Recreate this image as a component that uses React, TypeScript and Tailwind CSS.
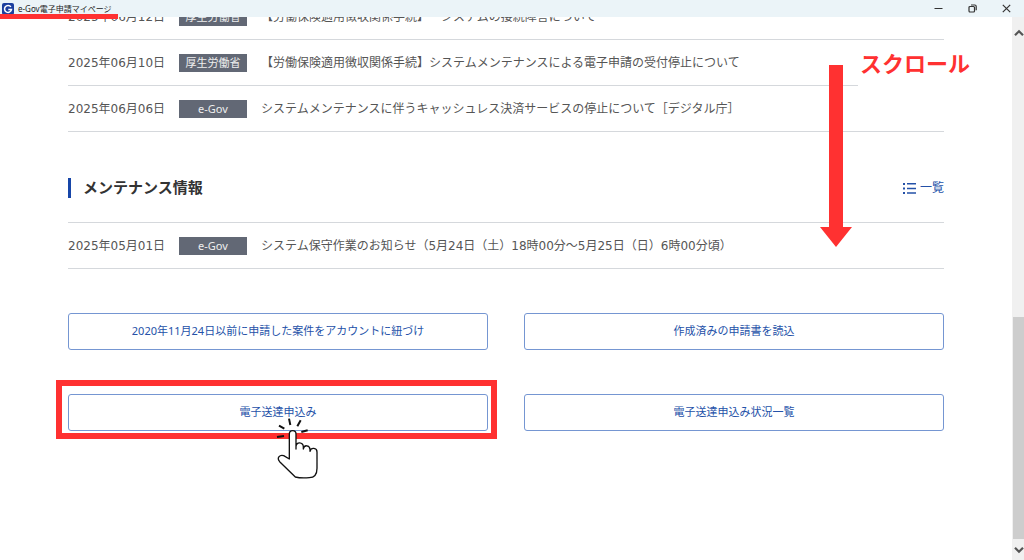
import React from 'react';

interface NewsItem {
  date: string;
  source: string;
  title: string;
}

const notices: NewsItem[] = [
  { date: '2025年06月12日', source: '厚生労働省', title: '【労働保険適用徴収関係手続】　システムの接続障害について' },
  { date: '2025年06月10日', source: '厚生労働省', title: '【労働保険適用徴収関係手続】システムメンテナンスによる電子申請の受付停止について' },
  { date: '2025年06月06日', source: 'e-Gov', title: 'システムメンテナンスに伴うキャッシュレス決済サービスの停止について［デジタル庁］' },
];

const maintenance: NewsItem[] = [
  { date: '2025年05月01日', source: 'e-Gov', title: 'システム保守作業のお知らせ（5月24日（土）18時00分～5月25日（日）6時00分頃）' },
];

const TitleBar: React.FC = () => (
  <header className="relative z-10 flex h-[17px] shrink-0 items-center justify-between bg-[#ebf4f8] pr-px">
    <div className="flex items-center gap-1 pl-0.5">
      <svg viewBox="0 0 12 12" className="h-3 w-3" aria-hidden="true">
        <rect width="12" height="12" rx="2" fill="#1c3f9e" />
        <path d="M8.9 3.9A3.5 3.5 0 1 0 9.5 6.4H6.3" fill="none" stroke="#fff" strokeWidth="1.5" />
      </svg>
      <h1 className="font-['Noto_Sans','Noto_Sans_CJK_JP',sans-serif] text-[8px] leading-none text-[#222]">
        e-Gov電子申請マイページ
      </h1>
    </div>
    <div className="flex text-[#333]">
      <button type="button" aria-label="最小化" className="flex w-[34px] items-center justify-center">
        <svg viewBox="0 0 9 9" className="h-[9px] w-[9px]" fill="none" stroke="currentColor">
          <path d="M.5 4.5h8" />
        </svg>
      </button>
      <button type="button" aria-label="元に戻す" className="flex w-[34px] items-center justify-center">
        <svg viewBox="0 0 9 9" className="h-[9px] w-[9px]" fill="none" stroke="currentColor" strokeWidth="1.2">
          <rect x="1" y="2.5" width="5.5" height="5.5" rx="1" />
          <path d="M3 1h3.8A1.4 1.4 0 0 1 8.2 2.4V6.2" />
        </svg>
      </button>
      <button type="button" aria-label="閉じる" className="flex w-[34px] items-center justify-center">
        <svg viewBox="0 0 9 9" className="h-[9px] w-[9px]" fill="none" stroke="currentColor" strokeWidth="1.2">
          <path d="M.8.8l7.4 7.4M8.2.8L.8 8.2" />
        </svg>
      </button>
    </div>
    {/* Marker under the window title */}
    <div className="absolute left-0 top-3.5 h-[5px] w-[118px] bg-[#ff3131]" />
  </header>
);

const NewsRow: React.FC<{ item: NewsItem }> = ({ item }) => (
  <li className="flex h-[46px] items-center border-b border-[#d5d8dc] text-xs text-[#555]">
    <time className="w-[111px] shrink-0">{item.date}</time>
    <span className="mr-3.5 flex h-[18px] w-[68px] shrink-0 items-center justify-center bg-[#626875] font-['Noto_Sans','Noto_Sans_CJK_JP',sans-serif] text-[11px] leading-none text-[#eee]">
      {item.source}
    </span>
    <span className="whitespace-nowrap [text-spacing-trim:space-all]">{item.title}</span>
  </li>
);

const ActionButton: React.FC<{ label: string }> = ({ label }) => (
  <button
    type="button"
    className="h-[37px] w-full rounded-[3px] border border-[#7596d2] bg-white font-['Noto_Sans','Noto_Sans_CJK_JP',sans-serif] text-[11px] text-[#2451a8]"
  >
    {label}
  </button>
);

const TapHand: React.FC = () => (
  <svg
    viewBox="78 140 129 189"
    className="absolute left-1/2 top-[23px] -ml-0.5 h-[63px] w-[43px]"
    fill="none"
    stroke="#111"
    strokeLinecap="round"
    strokeLinejoin="round"
    aria-hidden="true"
  >
    <path
      d="M118 266V191a10 10 0 0 1 20 0V236V228C139 213 159 215 160 229V236C162 222 179 224 180 237V243C183 230 201 232 201 245V294C201 312 192 322 178 322C164 323 148 323 136 320L89 274C79 262 90 252 101 256L118 266Z"
      fill="#fff"
      strokeWidth="4"
    />
    <path d="M117 145l4 19M152 150l-10 18M87 166l16 9M173 180l-19 5M81 200l21-3" strokeWidth="6" strokeLinecap="butt" />
  </svg>
);

const ScrollBar: React.FC = () => (
  <div className="flex w-3 shrink-0 flex-col bg-[#f0f0f0] pl-px text-[#555]">
    <button type="button" aria-label="上へ" className="flex h-8 items-center justify-center">
      <svg viewBox="0 0 10 8" className="h-2 w-2.5" fill="none" stroke="currentColor" strokeWidth="2.2">
        <path d="M1 6.2L5 2.2L9 6.2" />
      </svg>
    </button>
    <div className="flex-[268]" />
    <div className="flex-[222] bg-[#cdcdcd]" />
    <button type="button" aria-label="下へ" className="flex h-[21px] items-center justify-center">
      <svg viewBox="0 0 10 8" className="h-2 w-2.5" fill="none" stroke="currentColor" strokeWidth="2.2">
        <path d="M1 1.8L5 5.8L9 1.8" />
      </svg>
    </button>
  </div>
);

const ScrollHint: React.FC = () => (
  <>
    <svg viewBox="0 0 32 182" className="absolute right-[160px] top-12 h-[182px] w-8" aria-hidden="true">
      <path d="M9 0H23V162H32L16 182L0 162H9Z" fill="#ff3131" />
    </svg>
    <div className="absolute right-10 top-7 bg-white px-0.5 pb-2 pt-1 text-[22px] font-bold leading-8 text-[#ff3131]">
      スクロール
    </div>
  </>
);

const App: React.FC = () => {
  return (
    <div className="flex h-screen flex-col overflow-hidden bg-white font-['DejaVu_Sans','Noto_Sans_CJK_JP',sans-serif]" lang="ja">
      <TitleBar />
      <div className="flex min-h-0 flex-1">
        <main className="relative min-w-0 flex-1 overflow-hidden px-[68px]">
          {/* The list is scrolled partly under the title bar */}
          <ul className="-mt-[23px]">
            {notices.map((item) => (
              <NewsRow key={item.date} item={item} />
            ))}
          </ul>

          <section>
            <div className="mb-6 mt-[46px] flex h-5 items-center justify-between">
              <h2 className="flex h-5 items-center border-l-[3px] border-[#1746a8] pl-3 text-[15px] font-bold leading-5 text-[#333]">
                メンテナンス情報
              </h2>
              <a href="#list" className="flex items-center gap-1 text-xs text-[#2451a8]">
                <svg viewBox="0 0 13 11" className="h-[11px] w-[13px]" fill="currentColor" aria-hidden="true">
                  <path d="M0 0h2v2H0zM4 0h9v1.5H4zM0 4.5h2v2H0zM4 4.7h9v1.5H4zM0 9h2v2H0zM4 9.3h9v1.5H4z" />
                </svg>
                一覧
              </a>
            </div>
            <ul className="border-t border-[#d5d8dc]">
              {maintenance.map((item) => (
                <NewsRow key={item.date} item={item} />
              ))}
            </ul>
          </section>

          <div className="mt-11 grid grid-cols-2 gap-x-9 gap-y-11">
            <ActionButton label="2020年11月24日以前に申請した案件をアカウントに紐づけ" />
            <ActionButton label="作成済みの申請書を読込" />
            <div className="relative">
              <ActionButton label="電子送達申込み" />
              <div className="pointer-events-none absolute -bottom-2 -left-3 -right-[9px] -top-3.5 border-[6px] border-[#ff3131]" />
              <TapHand />
            </div>
            <ActionButton label="電子送達申込み状況一覧" />
          </div>

          <ScrollHint />
        </main>
        <ScrollBar />
      </div>
    </div>
  );
};

export default App;
